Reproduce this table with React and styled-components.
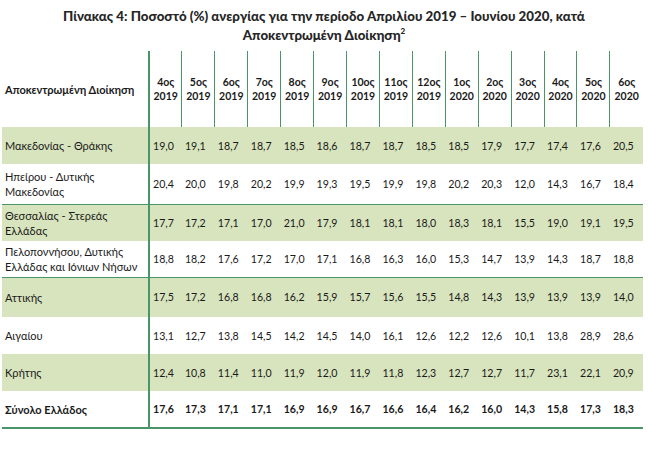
import React from "react";
import styled, { createGlobalStyle } from "styled-components";

const GlobalStyle = createGlobalStyle`
  body {
    margin: 0;
    background: #fff;
    font-family: Lato, "Liberation Sans", sans-serif;
    color: #1a1a1a;
  }
`;

const Page = styled.div`
  width: 648px;
  padding: 7px 0 0 2px;
  box-sizing: border-box;
`;

const Title = styled.h1`
  margin: 0 0 6px;
  padding-right: 2px;
  font-size: 13.3px;
  font-weight: 900;
  line-height: 19px;
  text-align: center;
  color: #262626;

  sup {
    font-size: 8px;
    vertical-align: 6px;
    line-height: 0;
  }
`;

const Table = styled.table`
  width: 641px;
  border-collapse: collapse;
  table-layout: fixed;
  border-bottom: 2.5px solid #4a946a;
`;

const LabelHead = styled.th`
  width: 143px;
  height: 76px;
  padding: 0 0 0 3px;
  text-align: left;
  font-size: 11px;
  font-weight: 700;
  border-right: 2px solid #4a946a;
`;

const PeriodHead = styled.th`
  padding: 0;
  font-size: 10.5px;
  font-weight: 700;
  line-height: 14px;
  text-align: center;
  border-right: ${({ $last }) => ($last ? "none" : "1px solid #4a946a")};
`;

const Row = styled.tr`
  height: ${({ $h }) => $h}px;
  background: ${({ $shaded }) => ($shaded ? "#d8e4bd" : "#fff")};
  border-top: ${({ $line }) => ($line ? "1px solid #4a946a" : "none")};
`;

const Label = styled.td`
  padding: 0 4px 0 3px;
  font-size: 11px;
  line-height: 15px;
  font-weight: ${({ $bold }) => ($bold ? 700 : 400)};
  border-right: 2px solid #4a946a;
`;

const Cell = styled.td`
  padding: 0 0 0 3px;
  font-size: 10.6px;
  font-weight: ${({ $bold }) => ($bold ? 700 : 400)};
  white-space: nowrap;
`;

const periods = [
  ["4ος", "2019"], ["5ος", "2019"], ["6ος", "2019"], ["7ος", "2019"],
  ["8ος", "2019"], ["9ος", "2019"], ["10ος", "2019"], ["11ος", "2019"],
  ["12ος", "2019"], ["1ος", "2020"], ["2ος", "2020"], ["3ος", "2020"],
  ["4ος", "2020"], ["5ος", "2020"], ["6ος", "2020"],
];

const rows = [
  { name: ["Μακεδονίας - Θράκης"], h: 37, shaded: true,
    v: "19,0 19,1 18,7 18,7 18,5 18,6 18,7 18,7 18,5 18,5 17,9 17,7 17,4 17,6 20,5" },
  { name: ["Ηπείρου - Δυτικής", "Μακεδονίας"], h: 40,
    v: "20,4 20,0 19,8 20,2 19,9 19,3 19,5 19,9 19,8 20,2 20,3 12,0 14,3 16,7 18,4" },
  { name: ["Θεσσαλίας - Στερεάς", "Ελλάδας"], h: 37, shaded: true, line: true,
    v: "17,7 17,2 17,1 17,0 21,0 17,9 18,1 18,1 18,0 18,3 18,1 15,5 19,0 19,1 19,5" },
  { name: ["Πελοποννήσου, Δυτικής", "Ελλάδας και Ιόνιων Νήσων"], h: 36,
    v: "18,8 18,2 17,6 17,2 17,0 17,1 16,8 16,3 16,0 15,3 14,7 13,9 14,3 18,7 18,8" },
  { name: ["Αττικής"], h: 40, shaded: true, line: true,
    v: "17,5 17,2 16,8 16,8 16,2 15,9 15,7 15,6 15,5 14,8 14,3 13,9 13,9 13,9 14,0" },
  { name: ["Αιγαίου"], h: 37,
    v: "13,1 12,7 13,8 14,5 14,2 14,5 14,0 16,1 12,6 12,2 12,6 10,1 13,8 28,9 28,6" },
  { name: ["Κρήτης"], h: 37, shaded: true,
    v: "12,4 10,8 11,4 11,0 11,9 12,0 11,9 11,8 12,3 12,7 12,7 11,7 23,1 22,1 20,9" },
  { name: ["Σύνολο Ελλάδος"], h: 37, bold: true,
    v: "17,6 17,3 17,1 17,1 16,9 16,9 16,7 16,6 16,4 16,2 16,0 14,3 15,8 17,3 18,3" },
];

export default function App() {
  return (
    <Page>
      <GlobalStyle />
      <Title>
        Πίνακας 4: Ποσοστό (%) ανεργίας για την περίοδο Απριλίου 2019 – Ιουνίου 2020, κατά
        <br />
        Αποκεντρωμένη Διοίκηση<sup>2</sup>
      </Title>
      <Table>
        <thead>
          <tr>
            <LabelHead>Αποκεντρωμένη Διοίκηση</LabelHead>
            {periods.map(([m, y], i) => (
              <PeriodHead key={i} $last={i === periods.length - 1}>
                {m}
                <br />
                {y}
              </PeriodHead>
            ))}
          </tr>
        </thead>
        <tbody>
          {rows.map((r, i) => (
            <Row key={i} $h={r.h} $shaded={r.shaded} $line={r.line}>
              <Label $bold={r.bold}>
                {r.name.map((n, j) => (
                  <div key={j}>{n}</div>
                ))}
              </Label>
              {r.v.split(" ").map((x, j) => (
                <Cell key={j} $bold={r.bold}>{x}</Cell>
              ))}
            </Row>
          ))}
        </tbody>
      </Table>
    </Page>
  );
}
